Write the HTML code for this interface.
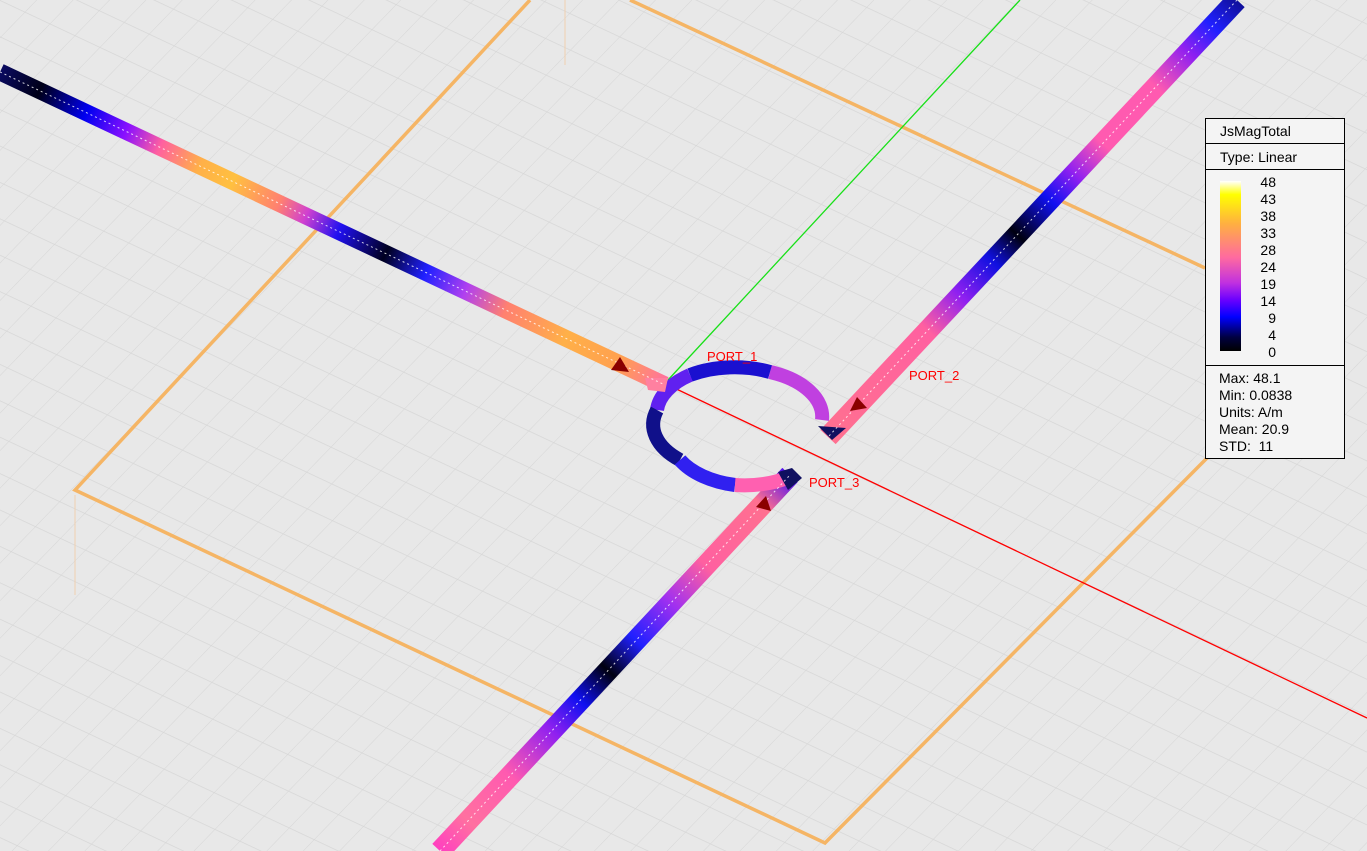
<!DOCTYPE html>
<html><head><meta charset="utf-8"><style>
html,body{margin:0;padding:0;width:1367px;height:851px;overflow:hidden;background:#e8e8e8;font-family:"Liberation Sans",sans-serif}
svg{position:absolute;left:0;top:0}
#lg{position:absolute;left:1205px;top:118px;width:138px;height:339px;background:#f4f4f4;border:1px solid #000;font-size:14px;color:#000}
#lg .r{border-bottom:1px solid #000;padding-left:14px}
</style></head><body>
<svg width="1367" height="851" viewBox="0 0 1367 851">
<defs>
<pattern id="g" width="25" height="25" patternUnits="userSpaceOnUse" patternTransform="matrix(1 0.47 -0.97 1 0 0)">
<path d="M0 0H25M0 0V25" stroke="#d6d6d6" stroke-width="1" fill="none"/>
</pattern>
<linearGradient id="lgL" gradientUnits="userSpaceOnUse" x1="0" y1="72" x2="665" y2="385">
<stop offset="0" stop-color="#0a0a60"/><stop offset="0.06" stop-color="#000018"/><stop offset="0.13" stop-color="#0000f0"/><stop offset="0.19" stop-color="#8a10ff"/><stop offset="0.24" stop-color="#ff60a0"/><stop offset="0.3" stop-color="#ffb048"/><stop offset="0.35" stop-color="#ffc040"/><stop offset="0.42" stop-color="#ff8070"/><stop offset="0.46" stop-color="#d040d0"/><stop offset="0.51" stop-color="#2010f0"/><stop offset="0.58" stop-color="#000020"/><stop offset="0.64" stop-color="#2020ff"/><stop offset="0.7" stop-color="#b040f0"/><stop offset="0.76" stop-color="#ff8070"/><stop offset="0.85" stop-color="#ffb048"/><stop offset="0.93" stop-color="#ffa050"/><stop offset="1" stop-color="#ff70a0"/>
</linearGradient>
<linearGradient id="lgR" gradientUnits="userSpaceOnUse" x1="1237" y1="0" x2="830" y2="435">
<stop offset="0" stop-color="#10109a"/><stop offset="0.06" stop-color="#2020ff"/><stop offset="0.12" stop-color="#9020f0"/><stop offset="0.2" stop-color="#ff5ab0"/><stop offset="0.33" stop-color="#ff5ab0"/><stop offset="0.4" stop-color="#9020f0"/><stop offset="0.46" stop-color="#1010f0"/><stop offset="0.54" stop-color="#000010"/><stop offset="0.6" stop-color="#1010e0"/><stop offset="0.68" stop-color="#9020f0"/><stop offset="0.76" stop-color="#ff60a0"/><stop offset="1" stop-color="#ff7090"/>
</linearGradient>
<linearGradient id="lgB" gradientUnits="userSpaceOnUse" x1="440" y1="851" x2="790" y2="475">
<stop offset="0" stop-color="#ff40c0"/><stop offset="0.08" stop-color="#ff70a0"/><stop offset="0.2" stop-color="#ff5ab0"/><stop offset="0.32" stop-color="#9020f0"/><stop offset="0.4" stop-color="#1010f0"/><stop offset="0.48" stop-color="#000010"/><stop offset="0.56" stop-color="#2020ff"/><stop offset="0.66" stop-color="#a030f0"/><stop offset="0.76" stop-color="#ff60a0"/><stop offset="0.92" stop-color="#ff7090"/><stop offset="1" stop-color="#5010f0"/>
</linearGradient>
</defs>
<rect width="1367" height="851" fill="url(#g)"/>
<g stroke="#f5b565" stroke-width="3.5" fill="none">
<path d="M530 0 L75 490 L825 843 L1210 455"/>
<path d="M630 0 L1205 268"/>
</g>
<path d="M75 495 V595 M565 0 V65" stroke="#f0d0b0" stroke-width="1"/>
<path d="M668 380 L1020 0" stroke="#18e018" stroke-width="1.3"/>
<path d="M668 385 L1367 718" stroke="#ff0000" stroke-width="1.3"/>
<path d="M0 72 L665 385" stroke="url(#lgL)" stroke-width="17"/>
<path d="M1237 0 L828 437" stroke="url(#lgR)" stroke-width="21"/>
<path d="M440 851 L790 475" stroke="url(#lgB)" stroke-width="21"/>
<g fill="none" stroke-width="14">
<path d="M822 420 A82 48 0 0 0 770 372" stroke="#c040e0"/>
<path d="M770 372 A82 48 0 0 0 690 375" stroke="#1a10d0"/>
<path d="M690 375 A82 48 0 0 0 657 410" stroke="#6020f0"/>
<path d="M657 410 A82 48 0 0 0 680 460" stroke="#10108a"/>
<path d="M680 460 A82 48 0 0 0 735 485" stroke="#3020f0"/>
<path d="M735 485 A82 48 0 0 0 790 477" stroke="#ff60b0"/>
</g>
<path d="M818 426 L832 440 L846 428 Z" fill="#101060"/>
<path d="M778 472 L792 468 L802 478 L788 490 Z" fill="#101060"/>
<path d="M645 378 L668 378 L665 392 L648 390 Z" fill="#ff80a0"/>
<g stroke="#ffffff" stroke-width="1" stroke-dasharray="2 3" fill="none" opacity="0.8">
<path d="M0 72 L665 385"/><path d="M1237 0 L828 437"/><path d="M440 851 L790 475"/>
</g>
<g fill="#8a0000">
<path d="M611 370 L620 357 L629 372 Z"/>
<path d="M850 411 L857 397 L867 408 Z"/>
<path d="M756 507 L766 496 L771 511 Z"/>
</g>
<g fill="#ff0000" font-size="13" font-family="Liberation Sans,sans-serif">
<text x="707" y="361">PORT_1</text>
<text x="909" y="380">PORT_2</text>
<text x="809" y="487">PORT_3</text>
</g>
</svg>
<div id="lg">
<div class="r" style="height:24px;line-height:24px">JsMagTotal</div>
<div class="r" style="height:25px;line-height:26px">Type: Linear</div>
<div class="r" style="height:195px;position:relative;padding:0">
<div style="position:absolute;left:14px;top:11px;width:21px;height:170px;background:linear-gradient(#ffffff,#ffff00 8%,#ffb040 25%,#ff6aa0 45%,#c030e0 60%,#6a00ff 70%,#0000ff 80%,#000040 92%,#000000)"></div>
<div style="position:absolute;left:0;width:70px;top:4px;text-align:right;line-height:17px">48<br>43<br>38<br>33<br>28<br>24<br>19<br>14<br>9<br>4<br>0</div>
</div>
<div style="padding:4px 0 0 13px;line-height:17px">Max: 48.1<br>Min: 0.0838<br>Units: A/m<br>Mean: 20.9<br>STD:&nbsp; 11</div>
</div>
</body></html>
